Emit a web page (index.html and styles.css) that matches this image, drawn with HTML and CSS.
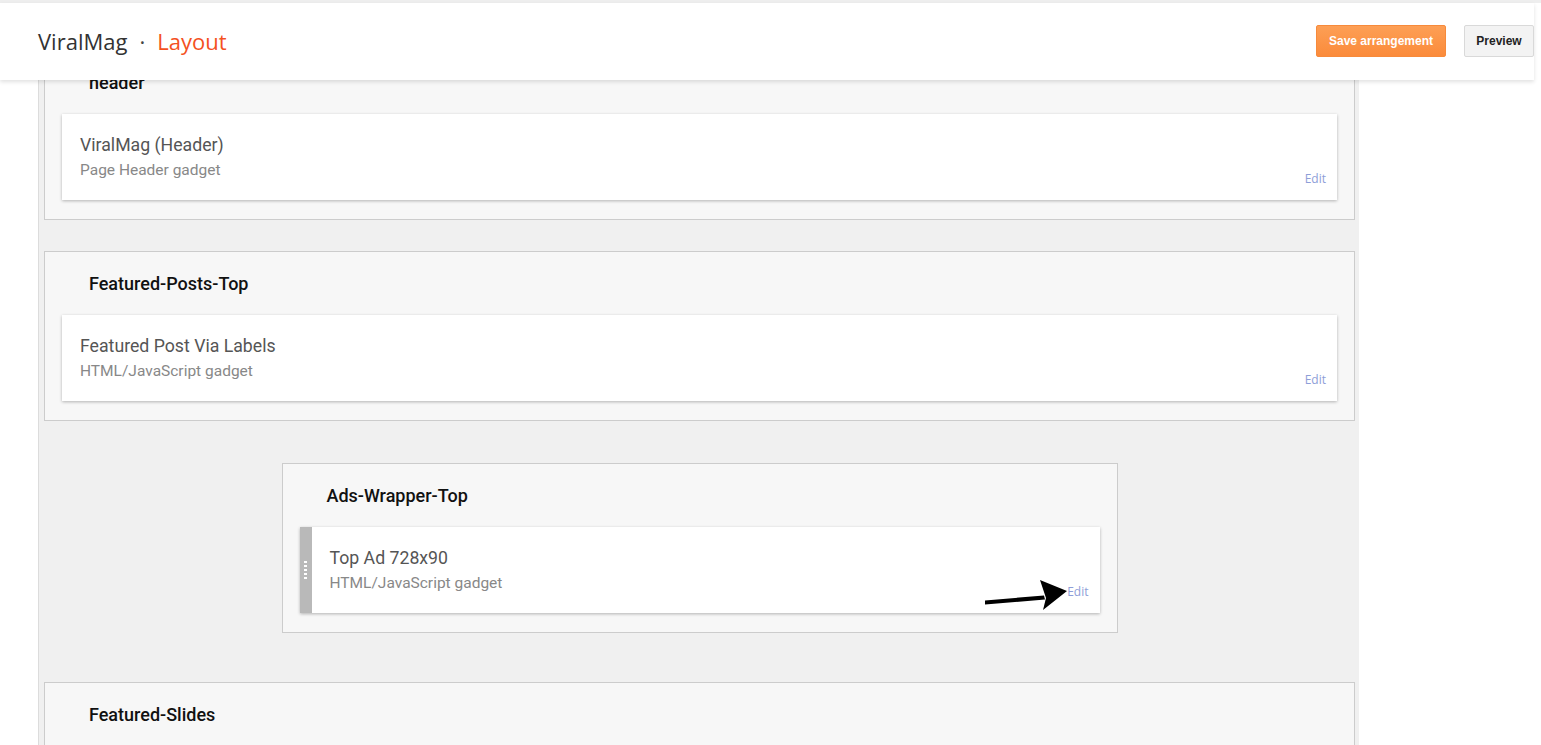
FILE: index.html
```html
<!DOCTYPE html>
<html>
<head>
<meta charset="utf-8">
<link rel="stylesheet" href="styles.css">
</head>
<body>
<div class="topstrip"></div>
<header class="appbar">
  <div class="brand"><span class="blog">ViralMag</span><span class="dot">·</span><span class="page">Layout</span></div>
  <div class="actions">
    <button class="btn-save">Save arrangement</button>
    <button class="btn-preview">Preview</button>
  </div>
</header>
<div class="canvas">
  <main class="column">
    <section class="region">
      <h2 class="region-title">header</h2>
      <div class="widget">
        <div class="w-title">ViralMag (Header)</div>
        <div class="w-sub">Page Header gadget</div>
        <a class="w-edit">Edit</a>
      </div>
    </section>
    <section class="region gap32">
      <h2 class="region-title">Featured-Posts-Top</h2>
      <div class="widget">
        <div class="w-title">Featured Post Via Labels</div>
        <div class="w-sub">HTML/JavaScript gadget</div>
        <a class="w-edit">Edit</a>
      </div>
    </section>
    <section class="region narrow gap43">
      <h2 class="region-title">Ads-Wrapper-Top</h2>
      <div class="widget draggable">
        <div class="handle"><span></span><span></span><span></span><span></span><span></span></div>
        <div class="w-body">
          <div class="w-title">Top Ad 728x90</div>
          <div class="w-sub">HTML/JavaScript gadget</div>
          <a class="w-edit">Edit</a>
        </div>
        <svg class="arrow" width="100" height="40" viewBox="0 0 100 40">
          <path d="M3 21.5 L62 16.5 L63 20.5 L3 25.5 Z" fill="#000"/>
          <path d="M58 1 L85 12 L61 31 L64 19 Z" fill="#000"/>
        </svg>
      </div>
    </section>
    <section class="region gap50">
      <h2 class="region-title">Featured-Slides</h2>
    </section>
  </main>
</div>
</body>
</html>
```

FILE: styles.css
```css
html, body {
  margin: 0;
  padding: 0;
  background: #fff;
  overflow: hidden;
  height: 745px;
}
.topstrip {
  height: 3px;
  background: #eeeeee;
}
.appbar {
  position: absolute;
  left: 0;
  top: 3px;
  width: 1534px;
  height: 77px;
  background: #fff;
  box-shadow: 0 2px 4px rgba(0,0,0,0.12);
  display: flex;
  align-items: center;
  justify-content: space-between;
  z-index: 5;
}
.brand {
  padding-left: 38px;
  font-family: "Open Sans", sans-serif;
  font-size: 22px;
  color: #333;
  margin-top: -1px;
}
.brand .dot {
  margin: 0 12px 0 12px;
  color: #444;
}
.brand .page {
  color: #f4511e;
}
.actions {
  display: flex;
  gap: 18px;
  margin-top: -2px;
}
.btn-save, .btn-preview {
  font-family: "Liberation Sans", Arial, sans-serif;
  font-weight: bold;
  font-size: 12px;
  height: 32px;
  border-radius: 2px;
  cursor: pointer;
}
.btn-save {
  width: 130px;
  color: #fff;
  background: linear-gradient(#fd9f55, #fb8b3b);
  border: 1px solid #f78a3b;
}
.btn-preview {
  width: 70px;
  color: #222;
  background: #f3f3f3;
  border: 1px solid #d9d9d9;
}
.canvas {
  padding-left: 38px;
}
.column {
  width: 1311px;
  background: #f0f0f0;
  border-left: 1px solid #dcdcdc;
  padding: 47px 4px 40px 5px;
  min-height: 700px;
}
.region {
  background: #f7f7f7;
  border: 1px solid #cccccc;
  padding: 0 17px 19px 17px;
  font-family: Roboto, "Noto Sans", sans-serif;
}
.gap32 { margin-top: 31px; }
.gap43 { margin-top: 42px; }
.gap50 { margin-top: 49px; }
.narrow {
  width: 800px;
  margin-left: auto;
  margin-right: auto;
}
.region-title {
  margin: 0;
  height: 63px;
  padding-left: 27px;
  font-size: 18px;
  font-weight: 500;
  color: #111;
  line-height: 64px;
}
.widget {
  position: relative;
  background: #fff;
  height: 86px;
  box-shadow: 0 1px 3px rgba(0,0,0,0.28);
  padding: 0 11px 0 18px;
  box-sizing: border-box;
}
.widget.draggable {
  display: flex;
  padding: 0;
}
.handle {
  width: 12px;
  background: #b9b9b9;
  display: flex;
  flex-direction: column;
  align-items: center;
  justify-content: center;
  gap: 2px;
}
.handle span {
  width: 3px;
  height: 2px;
  background: #fff;
}
.w-body {
  position: relative;
  flex: 1;
  padding: 0 11px 0 18px;
}
.w-title {
  padding-top: 19px;
  font-size: 17.7px;
  color: #555;
  line-height: 24px;
}
.w-sub {
  margin-top: 3px;
  font-size: 15.5px;
  color: #888;
  line-height: 20px;
}
.w-edit {
  position: absolute;
  right: 11px;
  top: 56px;
  font-family: "Open Sans", sans-serif;
  font-size: 12px;
  color: #8e9ed8;
}
.arrow {
  position: absolute;
  left: 682px;
  top: 52px;
}
```
